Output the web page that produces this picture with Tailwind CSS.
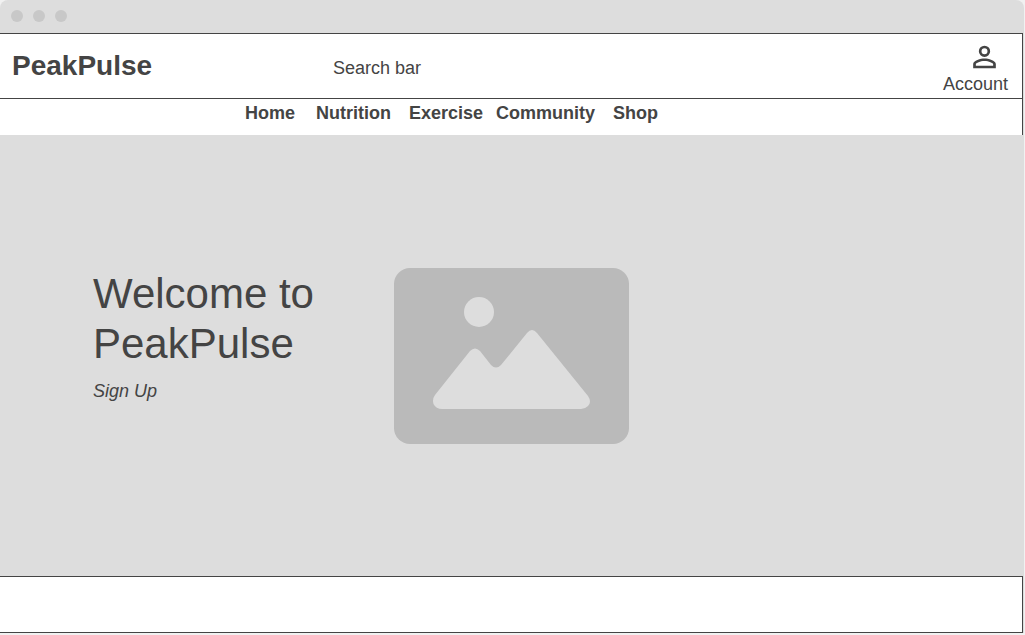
<!DOCTYPE html>
<html lang="en">
<head>
<meta charset="utf-8">
<meta name="viewport" content="width=device-width, initial-scale=1">
<title>PeakPulse</title>
<script src="https://cdn.jsdelivr.net/npm/@tailwindcss/browser@4"></script>
</head>
<body class="bg-[#f1f1f1] pr-px pb-0.5 font-['Liberation_Sans',Arial,sans-serif] text-lg leading-5 text-[#444444]">
<div class="flex min-h-[633px] flex-col overflow-hidden rounded-t-lg bg-[#dddddd]">
  <div class="flex h-[33px] items-center gap-2.5 px-[11px] pb-px" aria-hidden="true">
    <span class="size-3 rounded-full bg-[#c8c8c8]"></span>
    <span class="size-3 rounded-full bg-[#c8c8c8]"></span>
    <span class="size-3 rounded-full bg-[#c8c8c8]"></span>
  </div>
  <header class="mr-px border-t border-r border-[#444444] bg-white">
    <div class="flex h-[65px] items-center border-b border-[#444444] pr-3.5 pl-3">
      <a href="#" class="w-80 text-[28px] leading-8 font-bold">PeakPulse</a>
      <form class="flex-1" role="search">
        <input type="search" aria-label="Search bar" placeholder="Search bar" class="mt-1 block w-72 bg-transparent pl-px outline-none placeholder:text-[#444444] placeholder:opacity-100">
      </form>
      <button type="button" class="flex flex-col items-end pt-0.5">
        <svg class="mr-1.5 h-[34px] w-[35px]" viewBox="0 0 24 24" fill="currentColor" aria-hidden="true"><path d="M12 5.9a2.1 2.1 0 1 1 0 4.2 2.1 2.1 0 0 1 0-4.2m0 9c2.97 0 6.1 1.46 6.1 2.1v1.1H5.900V17c0-.64 3.130-2.100 6.100-2.100M12 4a4 4 0 1 0 0 8 4 4 0 0 0 0-8zm0 9c-2.670 0-8 1.340-8 4v3h16v-3c0-2.660-5.330-4-8-4z"/></svg>
        <span>Account</span>
      </button>
    </div>
    <nav class="flex h-9 items-start pt-1 pl-[245px] font-bold" aria-label="Main">
      <a href="#" class="mr-[21px]">Home</a>
      <a href="#" class="mr-[18px]">Nutrition</a>
      <a href="#" class="mr-[13px]">Exercise</a>
      <a href="#" class="mr-[18px]">Community</a>
      <a href="#">Shop</a>
    </nav>
  </header>
  <main class="flex min-h-[441px] flex-1 items-center pl-[93px]">
    <div class="w-[301px] pb-[42px]">
      <h1 class="text-[42px] leading-[50px]">Welcome to<br>PeakPulse</h1>
      <a href="#" class="mt-3 block italic">Sign Up</a>
    </div>
    <svg class="h-44 w-[235px] shrink-0" viewBox="0 0 235 176" role="img" aria-label="Image placeholder">
      <rect width="235" height="176" rx="16" fill="#bababa"/>
      <circle cx="85" cy="44" r="15" fill="#dddddd"/>
      <path d="M41 131L76 83Q81 78 86 83L97 97Q102 102 107 97L133 65Q138 59 143 65L194 128Q198 134 194 138Q191 141 187 141H48Q42 141 39.500 136Q38 131 41 127L76 83Z" fill="#dddddd"/>
    </svg>
  </main>
  <footer class="mr-px h-[57px] border-y border-r border-[#444444] bg-white"></footer>
</div>
</body>
</html>
